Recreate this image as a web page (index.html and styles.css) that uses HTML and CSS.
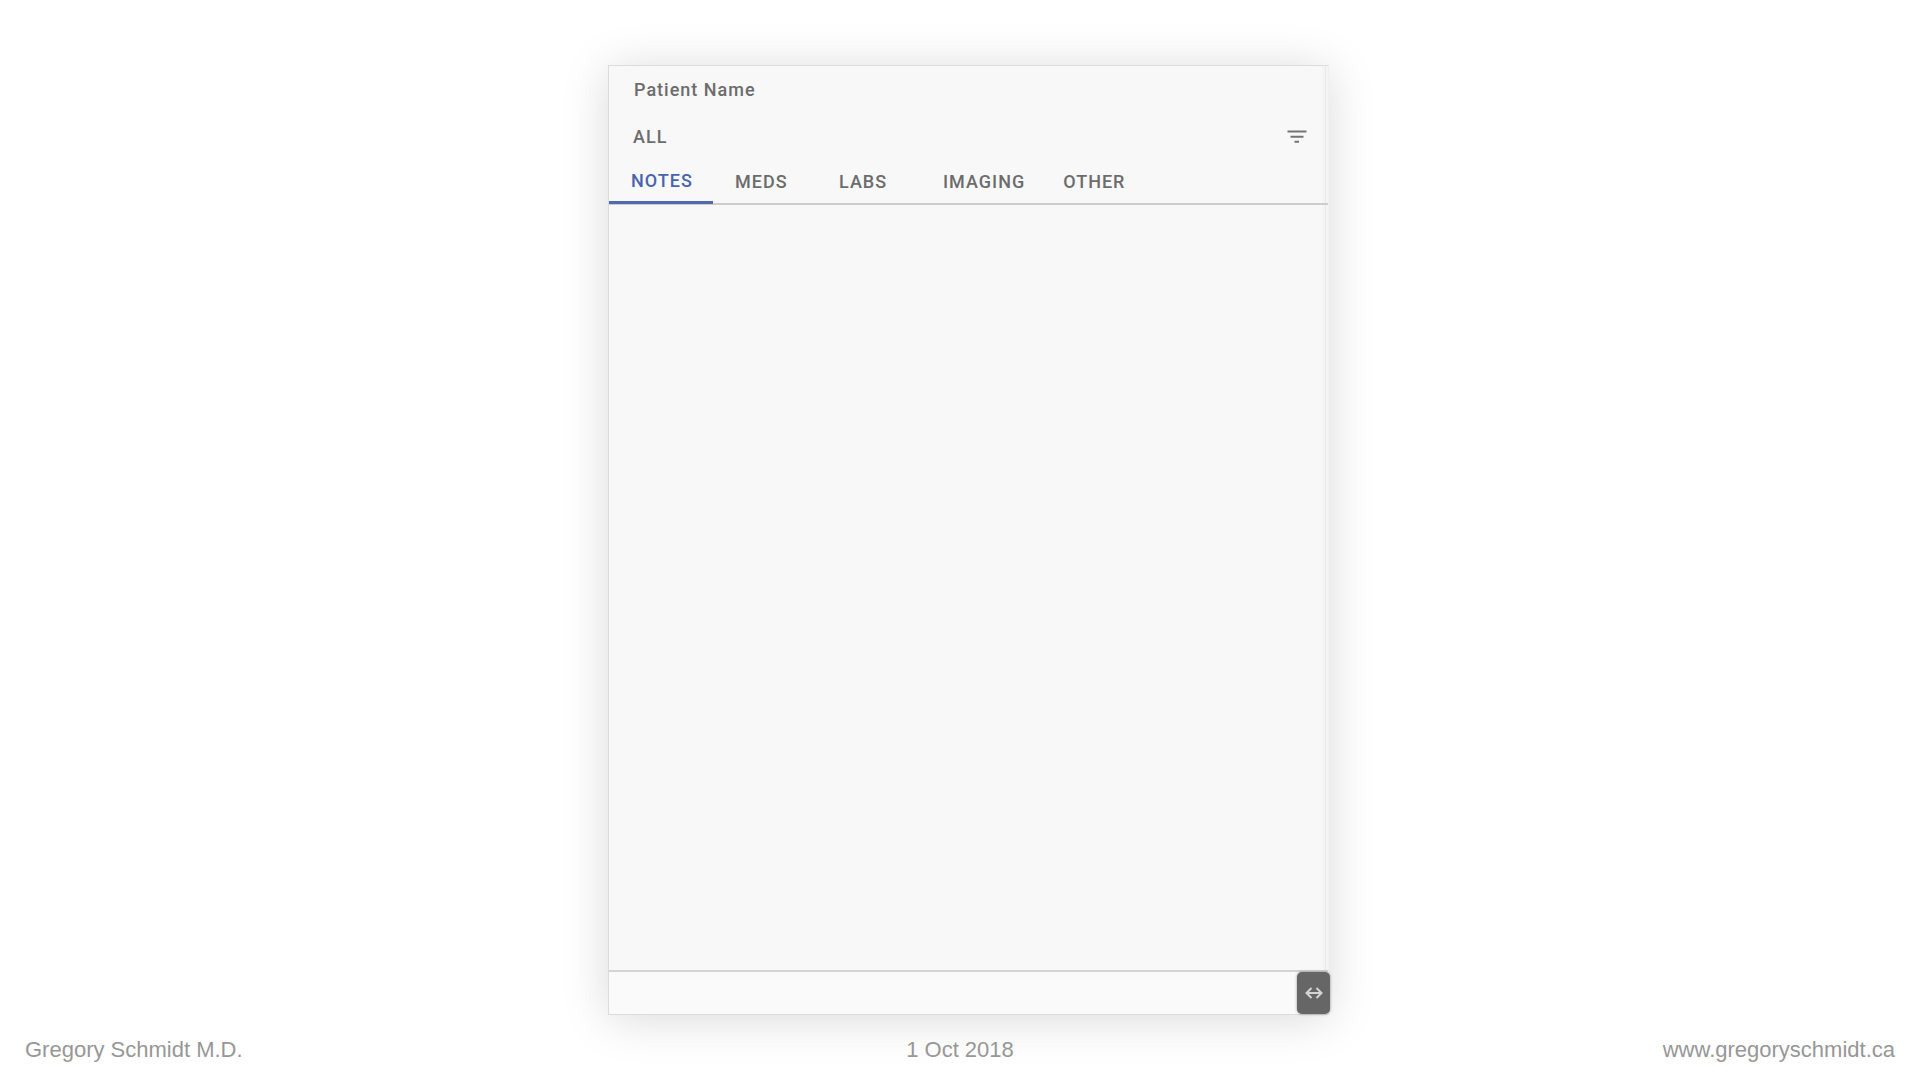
FILE: index.html
```html
<!DOCTYPE html>
<html lang="en">
<head>
  <meta charset="UTF-8">
  <title>Patient Name</title>
  <link rel="stylesheet" href="styles.css">
</head>
<body>

<main class="stage">
  <section class="panel">
    <header class="panel-header">
      <h1 class="patient-name">Patient Name</h1>
      <div class="filter-row">
        <span>ALL</span>
        <button class="filter-btn" type="button" aria-label="Filter">
          <svg width="20" height="14" viewBox="0 0 20 14" fill="none" stroke="#747474" stroke-width="2">
            <path d="M0.5 1.5H19.5M3.5 6.7H16.5M7.5 11.7H12"/>
          </svg>
        </button>
      </div>
      <nav class="tabs">
        <button class="tab active" type="button">NOTES</button>
        <button class="tab" type="button">MEDS</button>
        <button class="tab" type="button">LABS</button>
        <button class="tab" type="button">IMAGING</button>
        <button class="tab" type="button">OTHER</button>
      </nav>
    </header>

    <div class="panel-content"></div>

    <div class="panel-bottom">
      <button class="resize-btn" type="button" aria-label="Resize">
        <svg width="18" height="12" viewBox="0 0 18 12" fill="none" stroke="#d4d4d4" stroke-width="2">
          <path d="M1.5 6H16.5M6.5 1L1.5 6L6.5 11M11.5 1L16.5 6L11.5 11"/>
        </svg>
      </button>
    </div>
  </section>
</main>

<footer class="footer">
  <span>Gregory Schmidt M.D.</span>
  <span>1 Oct 2018</span>
  <a href="http://www.gregoryschmidt.ca">www.gregoryschmidt.ca</a>
</footer>

</body>
</html>
```

FILE: styles.css
```css
* {
  box-sizing: border-box;
}

body {
  display: flex;
  flex-direction: column;
  min-height: 100vh;
  margin: 0;
  background: #fff;
  font-family: Roboto, sans-serif;
}

button {
  padding: 0;
  border: none;
  background: none;
  font: inherit;
  color: inherit;
  cursor: pointer;
}

svg {
  display: block;
}

.stage {
  flex: 1;
  display: grid;
  grid-template-columns: 608fr 721fr 591fr;
  padding-top: 65px;
}

/* the gradient is the scrollbar edge */
.panel {
  grid-column: 2;
  display: flex;
  flex-direction: column;
  border: 1px solid #dcdcdc;
  border-right-color: #f0f0f0;
  background: linear-gradient(to right, #f8f8f8, #f3f3f3 5px, #e9e9e9 5px, #e9e9e9 6px, #f5f5f5 6px) right / 8px 100% no-repeat #f8f8f8;
  box-shadow: 0 4px 44px rgba(0, 0, 0, 0.15);
  color: #6c6c6c;
  font-size: 18px;
  font-weight: 500;
  line-height: 24px;
  letter-spacing: 1px;
}

.patient-name {
  margin: 0;
  padding: 12px 25px;
  font-size: 18px;
  font-weight: 500;
}

.filter-row {
  display: flex;
  align-items: center;
  justify-content: space-between;
  height: 46px;
  padding: 0 21px 0 24px;
}

.tabs {
  display: flex;
  height: 45px;
  border-bottom: 2px solid #cdcdcd;
}

.tab {
  min-width: 104px;
  height: 44px;
  padding: 0 16px 0 22px;
  border-bottom: 1px solid transparent;
  text-align: left;
  letter-spacing: 1px;
}

.tab.active {
  border-bottom: 3px solid #5069b0;
  color: #4a63ae;
}

.panel-content {
  flex: 1;
}

.panel-bottom {
  display: flex;
  justify-content: flex-end;
  height: 44px;
  border-top: 2px solid #d4d4d4;
  background: #fafafa;
}

.resize-btn {
  display: flex;
  align-items: center;
  justify-content: center;
  width: 33px;
  height: 42px;
  margin-right: -2px;
  border-radius: 5px;
  background: #666;
  box-shadow: 0 0 3px rgba(0, 0, 0, 0.4);
}

.footer {
  display: grid;
  grid-template-columns: 1fr auto 1fr;
  height: 65px;
  padding: 21px 25px 0;
  color: #979797;
  font-family: "Liberation Sans", Arial, sans-serif;
  font-size: 22px;
  line-height: 28px;
}

.footer a {
  justify-self: end;
  color: inherit;
  text-decoration: none;
}
```
